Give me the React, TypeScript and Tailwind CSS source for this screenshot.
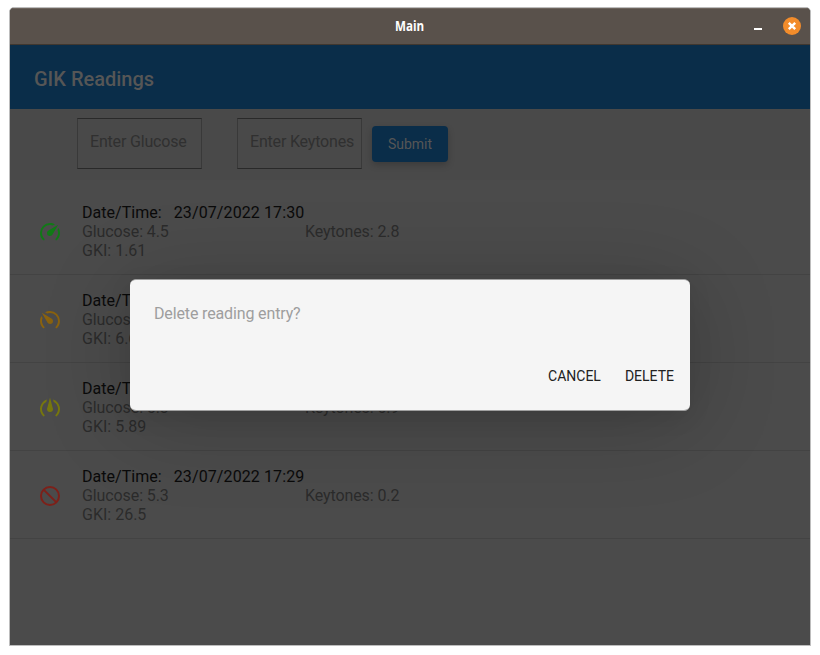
import React from "react";

type Kind = "fast" | "slow" | "medium" | "cancel";

const GAUGE =
  "M12,16A3,3 0 0,1 9,13C9,11.88 9.61,10.9 10.5,10.39L20.21,4.77L14.68,14.35C14.18,15.33 13.17,16 12,16M12,3C13.81,3 15.5,3.5 16.97,4.32L14.87,5.53C14,5.19 13,5 12,5A8,8 0 0,0 4,13C4,15.21 4.89,17.21 6.34,18.65H6.35C6.74,19.04 6.74,19.67 6.35,20.06C5.96,20.45 5.32,20.45 4.93,20.07C3.12,18.26 2,15.76 2,13A10,10 0 0,1 12,3M22,13C22,15.76 20.88,18.26 19.07,20.07C18.68,20.45 18.05,20.45 17.66,20.06C17.27,19.67 17.27,19.04 17.66,18.65C19.11,17.2 20,15.21 20,13C20,12 19.81,11 19.46,10.1L20.67,8C21.5,9.5 22,11.18 22,13Z";

function StatusIcon({ kind }: { kind: Kind }) {
  if (kind === "fast")
    return (
      <svg viewBox="0 0 24 24" className="size-6 fill-[#107a16]">
        <path d={GAUGE} />
      </svg>
    );
  if (kind === "slow")
    return (
      <svg viewBox="0 0 24 24" className="size-6 fill-[#8a620e]">
        <path d={GAUGE} transform="translate(24 0) scale(-1 1)" />
      </svg>
    );
  if (kind === "medium")
    return (
      <svg viewBox="0 0 24 24" className="size-6 fill-[#77770d]">
        <path d="M12 1.5L9.4 11.5C9.15 12 9 12.5 9 13A3 3 0 0 0 15 13C15 12.5 14.85 12 14.6 11.5Z" />
        <path d="M8.9 3.5L8.3 5.9A8 8 0 0 0 6.34 18.65A1 1 0 0 1 4.93 20.07A10 10 0 0 1 8.9 3.5ZM15.1 3.5L15.7 5.9A8 8 0 0 1 17.66 18.65A1 1 0 0 0 19.07 20.07A10 10 0 0 0 15.1 3.5Z" />
      </svg>
    );
  return (
    <svg viewBox="0 0 24 24" className="size-6 fill-none stroke-[#7d2019] stroke-2">
      <circle cx="12" cy="12" r="9" />
      <path d="M5.6 5.6L18.4 18.4" />
    </svg>
  );
}

const readings: { kind: Kind; time: string; glucose: string; ketones: string; gki: string }[] = [
  { kind: "fast", time: "23/07/2022 17:30", glucose: "4.5", ketones: "2.8", gki: "1.61" },
  { kind: "slow", time: "23/07/2022 17:30", glucose: "6.0", ketones: "0.9", gki: "6.67" },
  { kind: "medium", time: "23/07/2022 17:29", glucose: "5.3", ketones: "0.9", gki: "5.89" },
  { kind: "cancel", time: "23/07/2022 17:29", glucose: "5.3", ketones: "0.2", gki: "26.5" },
];

function Field({ label }: { label: string }) {
  return (
    <div className="h-[51px] w-[125px] border-x border-y border-x-[#393939] border-y-[#292929] pt-[11px] pl-3 text-base leading-6 tracking-[-0.18px] whitespace-nowrap text-[#303030]">
      {label}
    </div>
  );
}

export default function App() {
  return (
    <div className="h-[655px] w-[820px] overflow-hidden bg-white pt-[7px] pl-[9px] font-['Roboto',sans-serif]">
      <div className="relative flex h-[639px] w-[802px] flex-col overflow-hidden rounded-t-[5px] border border-[#bdbdbd] bg-[#4b4b4b]">
        <header className="grid h-[37px] shrink-0 grid-cols-[1fr_auto_1fr] items-center border-t border-b border-t-[#6d645d] border-b-[#40372f] bg-[#59514b] pb-[2px]">
          <span />
          <span className="inline-block scale-x-[0.83] font-['Open_Sans',sans-serif] text-sm font-bold text-white">
            Main
          </span>
          <div className="flex items-center justify-end pr-[9px]">
            <span className="mt-[7px] mr-[21px] h-0.5 w-2 bg-white" />
            <svg viewBox="0 0 18 18" className="size-[18px]">
              <circle cx="9" cy="9" r="9" fill="#f28c2b" />
              <path d="M5.8 5.8L12.2 12.2M12.2 5.8L5.8 12.2" stroke="#fff" strokeWidth="2.4" />
            </svg>
          </div>
        </header>

        <div className="flex h-16 shrink-0 items-center bg-[#0a2d49] pt-1 pl-6 text-xl font-medium text-[#565656]">
          GIK Readings
        </div>

        <div className="flex h-[71px] shrink-0 bg-[#494949] pt-[9px] pl-[67px]">
          <Field label="Enter Glucose" />
          <div className="w-[35px]" />
          <Field label="Enter Keytones" />
          <button className="mt-2 ml-[10px] h-9 w-[76px] rounded bg-[#0a2d49] text-sm tracking-[-0.05px] text-[#565656] shadow-[0_3px_7px_rgba(0,0,0,0.2)]">
            Submit
          </button>
        </div>

        <main className="pt-[7px] text-base leading-[19px]">
          {readings.map((r, i) => (
            <div key={i} className="flex h-[88px] border-b border-[#434343] pt-4">
              <div className="w-[72px] pt-[17px] pl-7">
                <StatusIcon kind={r.kind} />
              </div>
              <div>
                <p className="tracking-[0.04px] text-[#0a0a0a]">
                  Date/Time: <span className="ml-2 tracking-[0.1px]">{r.time}</span>
                </p>
                <div className="flex tracking-[-0.1px] text-[#2b2b2b]">
                  <span className="w-[223px]">Glucose: {r.glucose}</span>
                  <span>Keytones: {r.ketones}</span>
                </div>
                <p className="text-[#2b2b2b]">GKI: {r.gki}</p>
              </div>
            </div>
          ))}
        </main>

        <div
          role="dialog"
          className="absolute top-[271px] left-[120px] flex h-[132px] w-[560px] flex-col justify-between rounded-[6px] border-y border-[#a0a0a0] bg-[#f5f5f5] shadow-[0_10px_90px_rgba(0,0,0,0.2),0_6px_24px_rgba(0,0,0,0.08)]"
        >
          <p className="pt-[22px] pl-6 text-base leading-6 tracking-[-0.14px] text-[#9e9e9e]">
            Delete reading entry?
          </p>
          <div className="flex justify-end gap-6 pr-4 pb-6 text-sm leading-5 text-[#212121]">
            <button>CANCEL</button>
            <button>DELETE</button>
          </div>
        </div>
      </div>
    </div>
  );
}
